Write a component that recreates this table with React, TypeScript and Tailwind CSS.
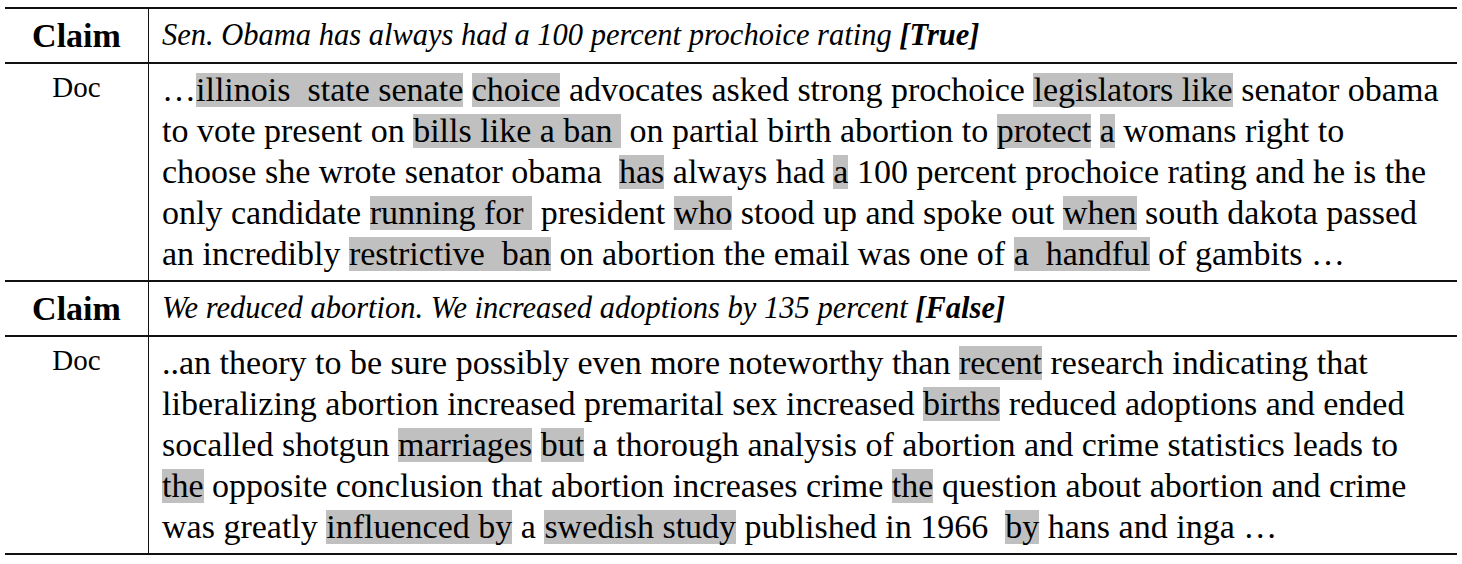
type Seg = string | { h: string };

const doc1: Seg[][] = [
  ['…', { h: 'illinois  state senate' }, ' ', { h: 'choice' }, ' advocates asked strong prochoice ', { h: 'legislators like' }, ' senator obama'],
  ['to vote present on ', { h: 'bills like a ban ' }, ' on partial birth abortion to ', { h: 'protect' }, ' ', { h: 'a' }, ' womans right to'],
  ['choose she wrote senator obama  ', { h: 'has' }, ' always had ', { h: 'a' }, ' 100 percent prochoice rating and he is the'],
  ['only candidate ', { h: 'running for ' }, ' president ', { h: 'who' }, ' stood up and spoke out ', { h: 'when' }, ' south dakota passed'],
  ['an incredibly ', { h: 'restrictive  ban' }, ' on abortion the email was one of ', { h: 'a  handful' }, ' of gambits …'],
];

const doc2: Seg[][] = [
  ['..an theory to be sure possibly even more noteworthy than ', { h: 'recent' }, ' research indicating that'],
  ['liberalizing abortion increased premarital sex increased ', { h: 'births' }, ' reduced adoptions and ended'],
  ['socalled shotgun ', { h: 'marriages' }, ' ', { h: 'but' }, ' a thorough analysis of abortion and crime statistics leads to'],
  [{ h: 'the' }, ' opposite conclusion that abortion increases crime ', { h: 'the' }, ' question about abortion and crime'],
  ['was greatly ', { h: 'influenced by' }, ' a ', { h: 'swedish study' }, ' published in 1966  ', { h: 'by' }, ' hans and inga …'],
];

function DocLines({ lines }: { lines: Seg[][] }) {
  return (
    <div className="pl-[13px] pt-[5px] pb-[6px] text-[34px] leading-[41px]">
      {lines.map((line, i) => (
        <div key={i} className="h-[41px] whitespace-pre">
          {line.map((s, j) =>
            typeof s === 'string' ? (
              <span key={j}>{s}</span>
            ) : (
              <span key={j} className="inline-block h-[34px] bg-[#c0c0c0] leading-[34px]">
                {s.h}
              </span>
            )
          )}
        </div>
      ))}
    </div>
  );
}

function ClaimRow({ text, label }: { text: string; label: string }) {
  return (
    <>
      <div className="flex h-[53px] items-center justify-center border-r border-[#111] text-[34px] font-bold">
        Claim
      </div>
      <div className="flex h-[53px] items-center whitespace-pre pl-[13px] text-[30.5px] italic">
        {text + ' '}
        <span className="font-bold">[{label}]</span>
      </div>
    </>
  );
}

function DocRow({ lines }: { lines: Seg[][] }) {
  return (
    <>
      <div className="border-r border-[#111] pt-[6px] text-center text-[29px] leading-[34px]">Doc</div>
      <DocLines lines={lines} />
    </>
  );
}

export default function App() {
  return (
    <div className="min-h-[564px] w-[1462px] bg-white pt-[7px] font-['Liberation_Serif','Times_New_Roman',serif] text-black">
      <div className="mx-[5px] border-y-2 border-[#111]">
        <div className="grid grid-cols-[144px_1fr] border-b-2 border-[#111]">
          <ClaimRow text="Sen. Obama has always had a 100 percent prochoice rating" label="True" />
        </div>
        <div className="grid grid-cols-[144px_1fr] border-b-2 border-[#111]">
          <DocRow lines={doc1} />
        </div>
        <div className="grid grid-cols-[144px_1fr] border-b-2 border-[#111]">
          <ClaimRow text="We reduced abortion. We increased adoptions by 135 percent" label="False" />
        </div>
        <div className="grid grid-cols-[144px_1fr]">
          <DocRow lines={doc2} />
        </div>
      </div>
    </div>
  );
}
